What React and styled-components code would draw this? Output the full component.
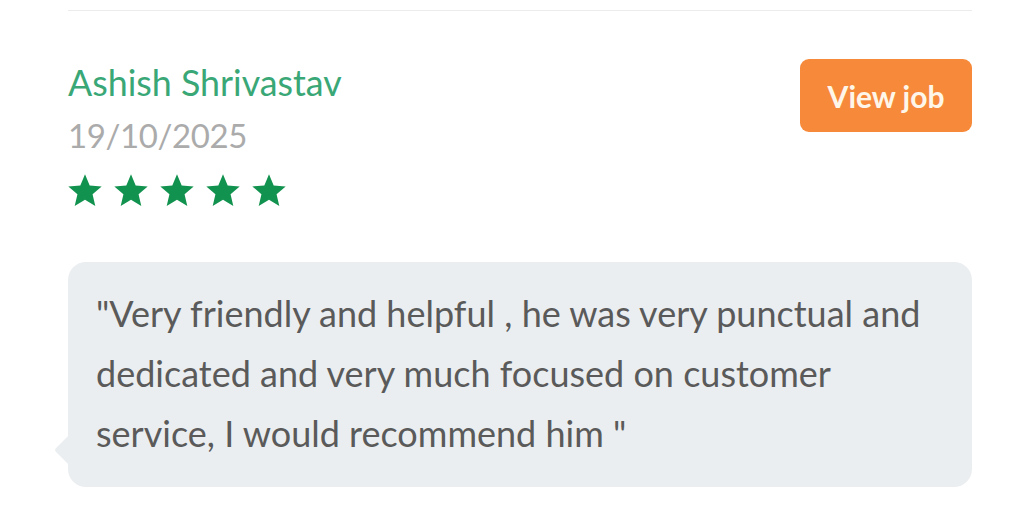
import React from 'react';
import styled, { createGlobalStyle } from 'styled-components';

const GlobalStyle = createGlobalStyle`
  body {
    margin: 0;
    background: #ffffff;
    font-family: Lato, "Noto Sans", sans-serif;
  }
`

const Container = styled.div`
  padding: 10px 52px 0 68px;
`

const Divider = styled.div`
  height: 1px;
  background-color: #ececec;
`

const Header = styled.div`
  display: flex;
  justify-content: space-between;
  align-items: flex-start;
  margin-top: 48px;
`

const Info = styled.div`
  display: flex;
  flex-direction: column;
  padding-top: 4px;
`

const Name = styled.span`
  font-size: 35.8px;
  line-height: 40px;
  color: #3aa777;
`

const Date = styled.span`
  font-size: 33px;
  line-height: 40px;
  letter-spacing: -0.4px;
  margin-top: 12px;
  color: #ababab;
`

const Stars = styled.div`
  display: flex;
  gap: 6px;
  margin-top: 16px;
  margin-left: -3px;
`

const Button = styled.button`
  width: 172px;
  height: 73px;
  border: none;
  border-radius: 9px;
  background-color: #f68a3a;
  color: #fff6ea;
  font-family: Lato, "Noto Sans", sans-serif;
  font-size: 30px;
  font-weight: 700;
  cursor: pointer;
`

const Bubble = styled.div`
  position: relative;
  margin-top: 51px;
  padding: 21px 30px 24px 28px;
  background-color: #ebeef0;
  border-radius: 18px;
  color: #5a5a5a;
  font-size: 36px;
  line-height: 60px;

  &::before {
    content: '';
    position: absolute;
    left: -9px;
    bottom: 25px;
    width: 24px;
    height: 24px;
    background-color: #ebeef0;
    border-radius: 3px;
    transform: rotate(45deg);
  }
`

const Quote = styled.p`
  position: relative;
  margin: 0;
`

const Star = () => (
  <svg width="40" height="40" viewBox="0 0 24 24" fill="#12924f">
    <path d="M12 17.27L18.18 21l-1.64-7.03L22 9.24l-7.19-.61L12 2 9.19 8.63 2 9.24l5.46 4.73L5.82 21z" />
  </svg>
)

const App = () => {
  return (
    <Container>
      <GlobalStyle />
      <Divider />
      <Header>
        <Info>
          <Name>Ashish Shrivastav</Name>
          <Date>19/10/2025</Date>
          <Stars>
            {[0, 1, 2, 3, 4].map(i => <Star key={i} />)}
          </Stars>
        </Info>
        <Button>View job</Button>
      </Header>
      <Bubble>
        <Quote>
          "Very friendly and helpful , he was very punctual and dedicated and very much focused on customer service, I would recommend him "
        </Quote>
      </Bubble>
    </Container>
  )
}

export default App;
